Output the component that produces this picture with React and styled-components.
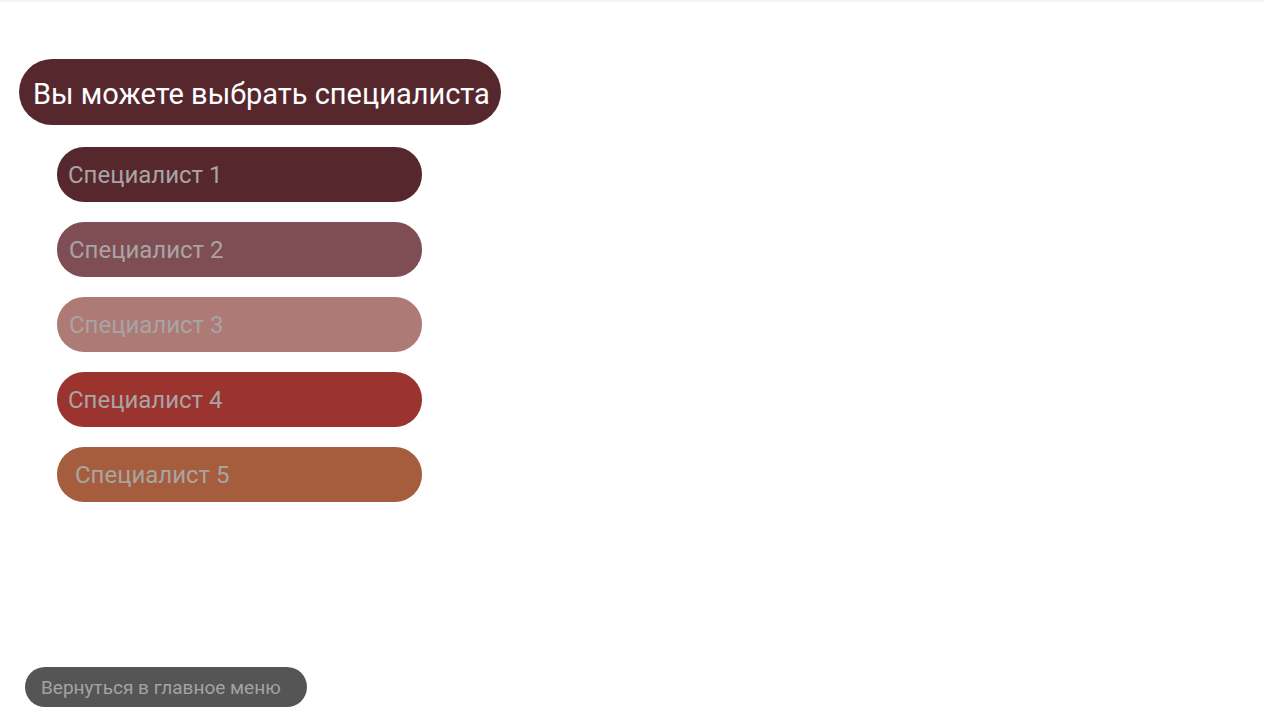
import React from "react";
import styled, { createGlobalStyle } from "styled-components";

const Global = createGlobalStyle`
  html, body { margin: 0; padding: 0; background: #fff; }
  body { font-family: Roboto, "Noto Sans", sans-serif; }
`;

const Page = styled.div`
  width: 1264px;
  height: 711px;
  box-sizing: border-box;
  border-top: 2px solid #f4f4f4;
  display: flex;
  flex-direction: column;
  overflow: hidden;
`;

const Title = styled.div`
  align-self: flex-start;
  margin: 57px 0 0 19px;
  height: 66px;
  width: 482px;
  box-sizing: border-box;
  padding: 4px 0 0 14px;
  border-radius: 33px;
  background: #56282d;
  color: #ffffff;
  font-size: 29px;
  display: flex;
  align-items: center;
  white-space: nowrap;
`;

const List = styled.div`
  display: flex;
  flex-direction: column;
  gap: 20px;
  margin: 22px 0 0 57px;
`;

const Item = styled.button`
  width: 365px;
  height: 55px;
  border: none;
  border-radius: 27px;
  background: ${(p) => p.$bg};
  color: #a9a4a4;
  font-family: Roboto, "Noto Sans", sans-serif;
  font-size: 24px;
  text-align: left;
  padding: 0 0 0 ${(p) => p.$pad}px;
  display: flex;
  align-items: center;
  cursor: pointer;
`;

const Spacer = styled.div`
  flex: 1;
`;

const Back = styled.button`
  margin: 0 0 4px 25px;
  align-self: flex-start;
  width: 282px;
  height: 40px;
  border: none;
  border-radius: 20px;
  background: #555555;
  color: #a3a3a3;
  font-family: Roboto, "Noto Sans", sans-serif;
  font-size: 19px;
  text-align: left;
  padding: 0 0 0 16px;
  cursor: pointer;
`;

const items = [
  { label: "Специалист 1", bg: "#56282d", pad: 11 },
  { label: "Специалист 2", bg: "#7f4e55", pad: 12 },
  { label: "Специалист 3", bg: "#ad7a76", pad: 12 },
  { label: "Специалист 4", bg: "#9b342f", pad: 11 },
  { label: "Специалист 5", bg: "#a55d3d", pad: 18 },
];

export default function App() {
  return (
    <>
      <Global />
      <Page>
        <Title>Вы можете выбрать специалиста</Title>
        <List>
          {items.map((it) => (
            <Item key={it.label} $bg={it.bg} $pad={it.pad}>
              {it.label}
            </Item>
          ))}
        </List>
        <Spacer />
        <Back>Вернуться в главное меню</Back>
      </Page>
    </>
  );
}
